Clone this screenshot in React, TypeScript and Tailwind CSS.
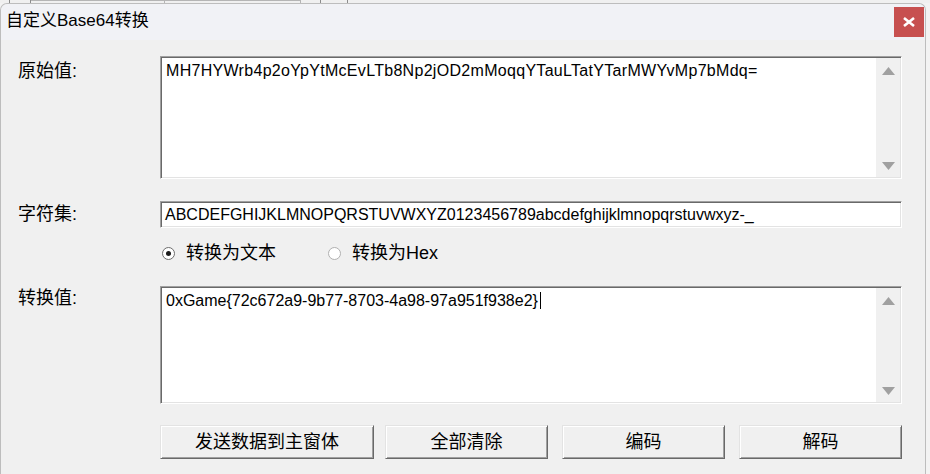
import React from "react";

const sunken =
  "border border-t-[#a0a0a0] border-l-[#a0a0a0] border-b-white border-r-white shadow-[inset_1px_1px_0_#696969,inset_-1px_-1px_0_#e3e3e3] bg-white";

const raised =
  "border border-t-[#e3e3e3] border-l-[#e3e3e3] border-b-[#696969] border-r-[#696969] shadow-[inset_1px_1px_0_#ffffff,inset_-1px_-1px_0_#a0a0a0] bg-[#f0f0f0]";

function Arrow({ down }: { down?: boolean }) {
  return (
    <svg width="13" height="8" viewBox="0 0 13 8">
      <path d={down ? "M0 0 H13 L6.5 8 Z" : "M0 8 H13 L6.5 0 Z"} fill="#a0a0a0" />
    </svg>
  );
}

function MultiBox({ text, caret, tracking }: { text: string; caret?: boolean; tracking?: string }) {
  return (
    <div className={`${sunken} flex h-full w-[742px] p-px`}>
      <div
        className={`flex-1 pl-[4px] pt-[4px] font-['Liberation_Sans',sans-serif] text-[16px] leading-[18px] text-black ${tracking ?? ""}`}
      >
        {text}
        {caret && <span className="ml-[2px] inline-block h-[17px] w-px align-[-3px] bg-black" />}
      </div>
      <div className="flex w-[24px] flex-col items-center justify-between bg-[#f0f0f0] pt-[9px] pb-[7px]">
        <Arrow />
        <Arrow down />
      </div>
    </div>
  );
}

function Label({ text, top }: { text: string; top: string }) {
  return (
    <div className={`h-[20px] w-[159px] shrink-0 pl-[17px] ${top} text-[18px] leading-[20px]`}>{text}</div>
  );
}

function Radio({ checked, label, width }: { checked?: boolean; label: string; width?: string }) {
  return (
    <div className={`flex h-[22px] items-center ${width ?? ""}`}>
      <span
        className={`flex h-[13px] w-[13px] items-center justify-center rounded-full border bg-white ${
          checked ? "border-[#6d6d6d]" : "border-[#b0b0b0]"
        }`}
      >
        {checked && <span className="h-[5px] w-[5px] rounded-full bg-[#1a1a1a]" />}
      </span>
      <span className="ml-[11px] text-[18px] leading-[20px]">{label}</span>
    </div>
  );
}

function Button({ label, width, className }: { label: string; width: string; className?: string }) {
  return (
    <button className={`${raised} ${width} ${className ?? ""} h-[34px] text-[18px] leading-[20px] text-black`}>
      {label}
    </button>
  );
}

export default function App() {
  return (
    <div className="flex h-[474px] w-[930px] flex-col overflow-hidden bg-[#f3f3f3] font-['Liberation_Sans','Noto_Sans_CJK_SC',sans-serif] text-black">
      {/* window behind */}
      <div className="flex h-[3px] shrink-0 bg-[#f0f0f0]">
        <div className="w-[10px] border-r border-[#8c8c8c]" />
        <div className="w-[21px] border-r border-[#8c8c8c]" />
        <div className="w-[134px] border-r border-t border-[#b5b5b5]" />
        <div className="w-[136px] border-r border-t border-[#b5b5b5]" />
        <div className="w-[20px] border-r border-[#8c8c8c]" />
        <div className="w-[27px] border-r border-[#8c8c8c]" />
        <div className="flex-1" />
      </div>

      <div className="flex flex-1">
        <div className="flex w-[926px] flex-col rounded-t-[7px] border-t border-l border-r border-[#bdbdbd] bg-[#f0f0f0]">
          {/* title bar */}
          <div className="flex h-[36px] shrink-0 items-start justify-between rounded-t-[7px] bg-[#f1f2f6]">
            <span className="pl-[5px] pt-[7px] text-[17px] leading-[20px]">自定义Base64转换</span>
            <div className="mr-[1px] mt-[3px] flex h-[30px] w-[30px] items-center justify-center bg-[#c75050]">
              <svg width="12" height="10" viewBox="0 0 12 10">
                <path d="M1 1 L11 9 M11 1 L1 9" stroke="#fff" strokeWidth="2.6" />
              </svg>
            </div>
          </div>

          {/* body */}
          <div className="flex flex-col pt-[16px]">
            <div className="flex h-[123px] shrink-0">
              <Label text="原始值:" top="pt-[5px]" />
              <MultiBox
                text="MH7HYWrb4p2oYpYtMcEvLTb8Np2jOD2mMoqqYTauLTatYTarMWYvMp7bMdq="
                tracking="tracking-[0.3px]"
              />
            </div>

            <div className="mt-[22px] flex h-[27px] shrink-0">
              <Label text="字符集:" top="pt-[3px]" />
              <div
                className={`${sunken} flex w-[742px] items-center pl-[4px] font-['Liberation_Sans',sans-serif] text-[16px] leading-[18px]`}
              >
                ABCDEFGHIJKLMNOPQRSTUVWXYZ0123456789abcdefghijklmnopqrstuvwxyz-_
              </div>
            </div>

            <div className="mt-[14px] flex h-[22px] shrink-0 pl-[161px]">
              <Radio checked label="转换为文本" width="w-[166px]" />
              <Radio label="转换为Hex" />
            </div>

            <div className="mt-[22px] flex h-[118px] shrink-0">
              <Label text="转换值:" top="pt-[2px]" />
              <MultiBox text="0xGame{72c672a9-9b77-8703-4a98-97a951f938e2}" caret />
            </div>

            <div className="mt-[21px] flex h-[34px] shrink-0 pl-[159px]">
              <Button label="发送数据到主窗体" width="w-[214px]" />
              <Button label="全部清除" width="w-[163px]" className="ml-[11px]" />
              <Button label="编码" width="w-[163px]" className="ml-[14px]" />
              <Button label="解码" width="w-[163px]" className="ml-[14px]" />
            </div>
          </div>
        </div>
        <div className="flex-1 bg-[#f3f3f3]" />
      </div>
    </div>
  );
}
